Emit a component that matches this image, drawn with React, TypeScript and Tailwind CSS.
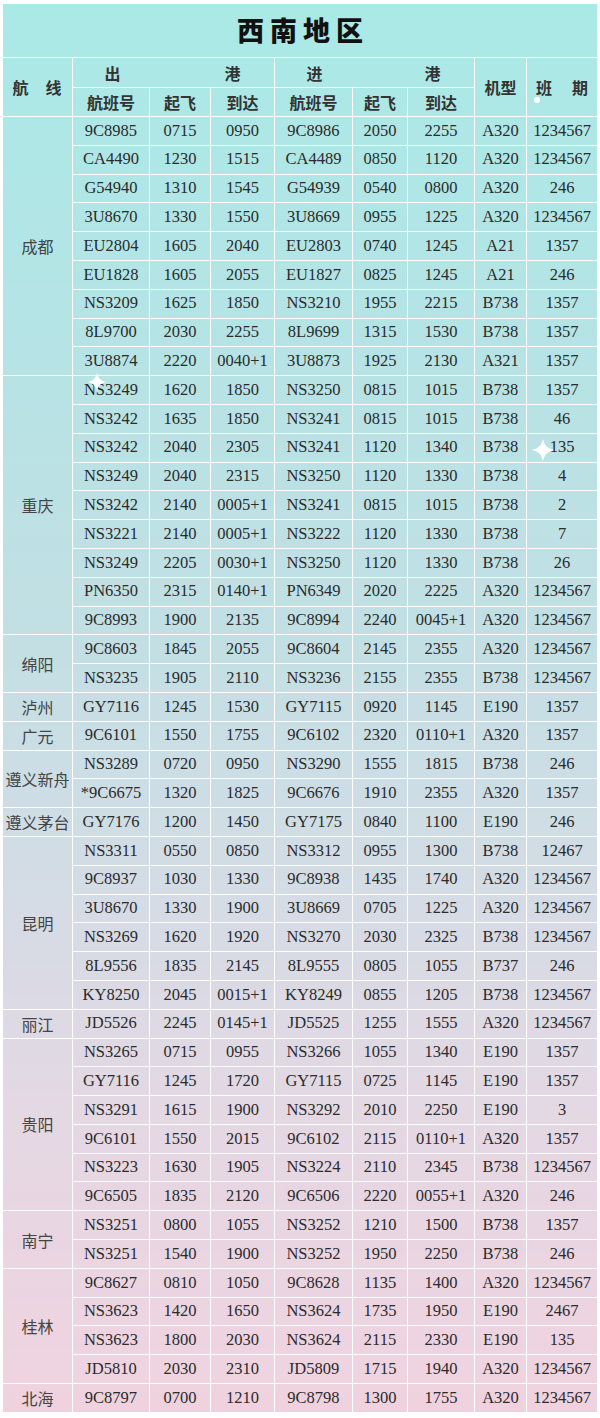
import React from "react";

type Row = [string, string, string, string, string, string, string, string];
type Group = { city: string; rows: Row[] };

const data: Group[] = [
  {
    city: "成都",
    rows: [
      ["9C8985", "0715", "0950", "9C8986", "2050", "2255", "A320", "1234567"],
      ["CA4490", "1230", "1515", "CA4489", "0850", "1120", "A320", "1234567"],
      ["G54940", "1310", "1545", "G54939", "0540", "0800", "A320", "246"],
      ["3U8670", "1330", "1550", "3U8669", "0955", "1225", "A320", "1234567"],
      ["EU2804", "1605", "2040", "EU2803", "0740", "1245", "A21", "1357"],
      ["EU1828", "1605", "2055", "EU1827", "0825", "1245", "A21", "246"],
      ["NS3209", "1625", "1850", "NS3210", "1955", "2215", "B738", "1357"],
      ["8L9700", "2030", "2255", "8L9699", "1315", "1530", "B738", "1357"],
      ["3U8874", "2220", "0040+1", "3U8873", "1925", "2130", "A321", "1357"],
    ],
  },
  {
    city: "重庆",
    rows: [
      ["NS3249", "1620", "1850", "NS3250", "0815", "1015", "B738", "1357"],
      ["NS3242", "1635", "1850", "NS3241", "0815", "1015", "B738", "46"],
      ["NS3242", "2040", "2305", "NS3241", "1120", "1340", "B738", "135"],
      ["NS3249", "2040", "2315", "NS3250", "1120", "1330", "B738", "4"],
      ["NS3242", "2140", "0005+1", "NS3241", "0815", "1015", "B738", "2"],
      ["NS3221", "2140", "0005+1", "NS3222", "1120", "1330", "B738", "7"],
      ["NS3249", "2205", "0030+1", "NS3250", "1120", "1330", "B738", "26"],
      ["PN6350", "2315", "0140+1", "PN6349", "2020", "2225", "A320", "1234567"],
      ["9C8993", "1900", "2135", "9C8994", "2240", "0045+1", "A320", "1234567"],
    ],
  },
  {
    city: "绵阳",
    rows: [
      ["9C8603", "1845", "2055", "9C8604", "2145", "2355", "A320", "1234567"],
      ["NS3235", "1905", "2110", "NS3236", "2155", "2355", "B738", "1234567"],
    ],
  },
  { city: "泸州", rows: [["GY7116", "1245", "1530", "GY7115", "0920", "1145", "E190", "1357"]] },
  { city: "广元", rows: [["9C6101", "1550", "1755", "9C6102", "2320", "0110+1", "A320", "1357"]] },
  {
    city: "遵义新舟",
    rows: [
      ["NS3289", "0720", "0950", "NS3290", "1555", "1815", "B738", "246"],
      ["*9C6675", "1320", "1825", "9C6676", "1910", "2355", "A320", "1357"],
    ],
  },
  { city: "遵义茅台", rows: [["GY7176", "1200", "1450", "GY7175", "0840", "1100", "E190", "246"]] },
  {
    city: "昆明",
    rows: [
      ["NS3311", "0550", "0850", "NS3312", "0955", "1300", "B738", "12467"],
      ["9C8937", "1030", "1330", "9C8938", "1435", "1740", "A320", "1234567"],
      ["3U8670", "1330", "1900", "3U8669", "0705", "1225", "A320", "1234567"],
      ["NS3269", "1620", "1920", "NS3270", "2030", "2325", "B738", "1234567"],
      ["8L9556", "1835", "2145", "8L9555", "0805", "1055", "B737", "246"],
      ["KY8250", "2045", "0015+1", "KY8249", "0855", "1205", "B738", "1234567"],
    ],
  },
  { city: "丽江", rows: [["JD5526", "2245", "0145+1", "JD5525", "1255", "1555", "A320", "1234567"]] },
  {
    city: "贵阳",
    rows: [
      ["NS3265", "0715", "0955", "NS3266", "1055", "1340", "E190", "1357"],
      ["GY7116", "1245", "1720", "GY7115", "0725", "1145", "E190", "1357"],
      ["NS3291", "1615", "1900", "NS3292", "2010", "2250", "E190", "3"],
      ["9C6101", "1550", "2015", "9C6102", "2115", "0110+1", "A320", "1357"],
      ["NS3223", "1630", "1905", "NS3224", "2110", "2345", "B738", "1234567"],
      ["9C6505", "1835", "2120", "9C6506", "2220", "0055+1", "A320", "246"],
    ],
  },
  {
    city: "南宁",
    rows: [
      ["NS3251", "0800", "1055", "NS3252", "1210", "1500", "B738", "1357"],
      ["NS3251", "1540", "1900", "NS3252", "1950", "2250", "B738", "246"],
    ],
  },
  {
    city: "桂林",
    rows: [
      ["9C8627", "0810", "1050", "9C8628", "1135", "1400", "A320", "1234567"],
      ["NS3623", "1420", "1650", "NS3624", "1735", "1950", "E190", "2467"],
      ["NS3623", "1800", "2030", "NS3624", "2115", "2330", "E190", "135"],
      ["JD5810", "2030", "2310", "JD5809", "1715", "1940", "A320", "1234567"],
    ],
  },
  { city: "北海", rows: [["9C8797", "0700", "1210", "9C8798", "1300", "1755", "A320", "1234567"]] },
];

const cjk = "font-['Liberation_Serif','Noto_Sans_CJK_SC',serif]";
const td = "border border-white p-0 text-center align-middle";

function Sparkle({ className }: { className: string }) {
  return (
    <svg viewBox="0 0 20 20" className={className}>
      <path d="M10 0 C11.5 6 14 8.5 20 10 C14 11.5 11.5 14 10 20 C8.5 14 6 11.5 0 10 C6 8.5 8.5 6 10 0 Z" fill="#ffffff" />
    </svg>
  );
}

export default function App() {
  return (
    <div className="bg-white w-[600px] h-[1418px] pt-[3px] pl-[2px]">
      <div className="relative w-[595px]">
        <table
          className={`table-fixed border-collapse w-[595px] text-[#2b2b2b] text-[16.5px] leading-none ${cjk} bg-[linear-gradient(180deg,#a9e9e6_0%,#b6e3e5_25%,#c2dfe4_45%,#d3dce5_62%,#e3d8e3_78%,#f0d2df_100%)]`}
        >
          <colgroup>
            <col className="w-[70px]" />
            <col className="w-[77px]" />
            <col className="w-[61px]" />
            <col className="w-[64px]" />
            <col className="w-[78px]" />
            <col className="w-[55px]" />
            <col className="w-[67px]" />
            <col className="w-[52px]" />
            <col className="w-[71px]" />
          </colgroup>
          <tbody>
            <tr>
              <td colSpan={9} className={`${td} h-[54px]`}>
                <span className="font-['Noto_Sans_CJK_SC',sans-serif] font-black text-[27px] tracking-[6px] text-[#111] pl-[6px]">
                  西南地区
                </span>
              </td>
            </tr>
            <tr>
              <td rowSpan={2} className={`${td} font-['Noto_Sans_CJK_SC',sans-serif] font-bold text-[16px] text-[#333]`}>
                <span className="inline-flex gap-[17px] pr-[1px]">
                  <span>航</span>
                  <span>线</span>
                </span>
              </td>
              <td colSpan={3} className={`${td} h-[30px] font-['Noto_Sans_CJK_SC',sans-serif] font-bold text-[16px] text-[#333]`}>
                <span className="inline-flex gap-[104px] pr-[2px]">
                  <span>出</span>
                  <span>港</span>
                </span>
              </td>
              <td colSpan={3} className={`${td} font-['Noto_Sans_CJK_SC',sans-serif] font-bold text-[16px] text-[#333]`}>
                <span className="inline-flex gap-[102px] pr-[2px]">
                  <span>进</span>
                  <span>港</span>
                </span>
              </td>
              <td rowSpan={2} className={`${td} font-['Noto_Sans_CJK_SC',sans-serif] font-bold text-[16px] text-[#333]`}>
                机型
              </td>
              <td rowSpan={2} className={`${td} font-['Noto_Sans_CJK_SC',sans-serif] font-bold text-[16px] text-[#333]`}>
                <span className="inline-flex gap-[20px]">
                  <span>班</span>
                  <span>期</span>
                </span>
              </td>
            </tr>
            <tr className="font-['Noto_Sans_CJK_SC',sans-serif] font-bold text-[16px] text-[#333]">
              <td className={`${td} h-[29px]`}>航班号</td>
              <td className={td}>起飞</td>
              <td className={td}>到达</td>
              <td className={td}>航班号</td>
              <td className={td}>起飞</td>
              <td className={td}>到达</td>
            </tr>
            {data.map((g) =>
              g.rows.map((r, i) => (
                <tr key={g.city + i}>
                  {i === 0 && (
                    <td
                      rowSpan={g.rows.length}
                      className={`${td} font-['Noto_Sans_CJK_SC',sans-serif] text-[16px] text-[#444] whitespace-nowrap`}
                    >
                      {g.city}
                    </td>
                  )}
                  {r.map((c, j) => (
                    <td key={j} className={`${td} h-[28.8px]`}>
                      {c}
                    </td>
                  ))}
                </tr>
              ))
            )}
          </tbody>
        </table>
        <Sparkle className="absolute left-[86px] top-[368px] w-[18px] h-[22px]" />
        <Sparkle className="absolute left-[530px] top-[435px] w-[22px] h-[24px]" />
        <div className="absolute left-[532px] top-[94px] w-[6px] h-[6px] rounded-full bg-white" />
      </div>
    </div>
  );
}
